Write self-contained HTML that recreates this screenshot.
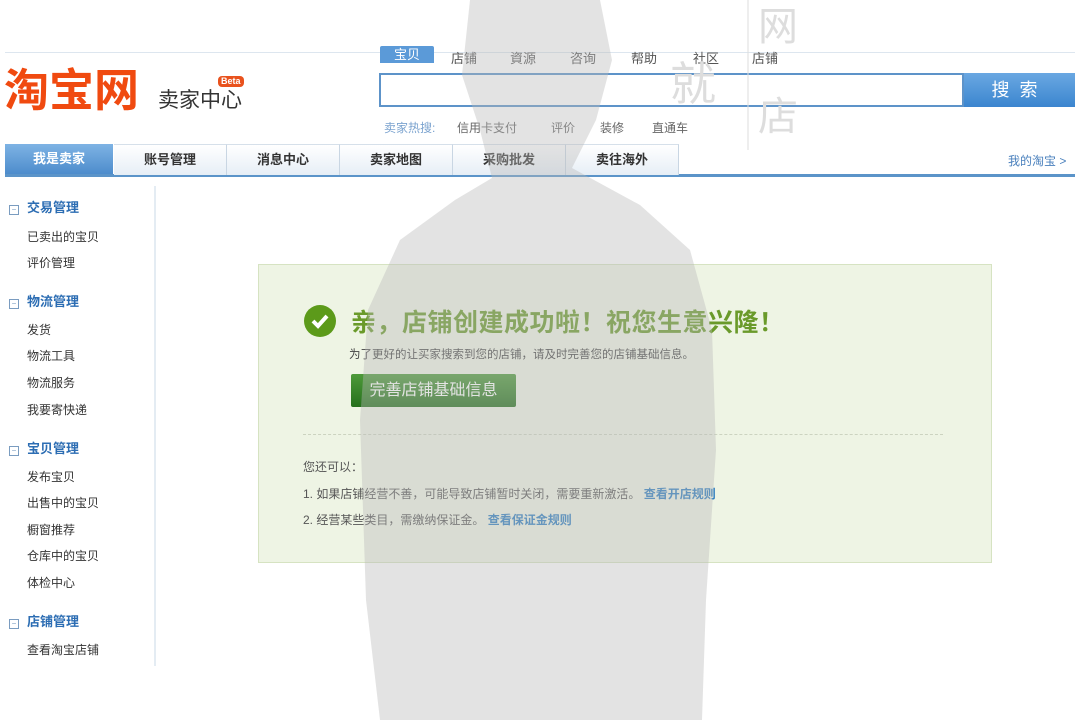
<!DOCTYPE html>
<html><head><meta charset="utf-8"><style>
body{margin:0;width:1080px;height:720px;background:#fff;position:relative;overflow:hidden;font-family:"Liberation Sans","Noto Sans CJK SC",sans-serif;font-size:12px;color:#333}
.a{position:absolute}
.topline{left:5px;top:52px;width:1070px;height:1px;background:#dde6ef}
.logo{left:4px;top:66px;font-size:45px;font-weight:bold;color:#f04a10;letter-spacing:0;line-height:50px}
.sub{left:158px;top:84px;font-size:21px;color:#333}
.beta{left:218px;top:76px;background:#e9521d;color:#fff;font-size:9px;border-radius:4px;padding:0 3px;line-height:11px;font-weight:bold}
.tabs span{position:absolute;top:48px;font-size:13px;color:#555}
.search{left:379px;top:73px;width:585px;height:34px;border:2px solid #5d93c9;box-sizing:border-box;background:#fff}
.sbtn{left:964px;top:73px;width:111px;height:34px;background:linear-gradient(#6aa8e2,#3b85cf);color:#fff;font-size:18px;text-align:center;line-height:34px;letter-spacing:10px}
.hot{top:119px;font-size:12px;color:#666}
.nav{left:5px;top:144px;width:1070px;height:30px;border-bottom:3px solid #5b94c9;box-sizing:content-box}
.nav div{position:absolute;top:0;height:30px;line-height:30px;text-align:center;font-weight:bold;font-size:13px;color:#333;background:linear-gradient(#fff,#e6eef6);border-right:1px solid #c9d6e3;border-top:1px solid #d6e0ea}
.side{left:5px;top:186px;width:149px;height:480px;border-right:2px solid #e4ecf3;background:#fff}
.side .h{position:absolute;left:4px;color:#2c6db3;font-weight:bold;font-size:13px}
.side .h b{display:inline-block;width:8px;height:8px;border:1px solid #7a9cc0;margin-right:8px;font-size:8px;line-height:7px;text-align:center;color:#7a9cc0;font-weight:normal}
.side .i{position:absolute;left:22px;font-size:12px;color:#333}
.box{left:258px;top:264px;width:734px;height:299px;background:#eef4e4;border:1px solid #d6e3c2;box-sizing:border-box}
</style></head><body>
<div class="a topline"></div>
<div class="a logo">淘宝网</div>
<div class="a sub">卖家中心</div>
<div class="a beta">Beta</div>
<div class="tabs">
<span style="left:380px;top:46px;background:#5b9ad8;color:#fff;padding:0 14px;height:17px;line-height:17px;border-radius:2px 2px 0 0">宝贝</span>
<span style="left:451px">店铺</span><span style="left:510px">資源</span><span style="left:570px">咨询</span><span style="left:631px">帮助</span><span style="left:693px">社区</span><span style="left:752px">店铺</span>
</div>
<div class="a search"></div>
<div class="a sbtn">搜索</div>
<span class="a hot" style="left:384px;color:#7ba3cf">卖家热搜:</span>
<span class="a hot" style="left:457px">信用卡支付</span>
<span class="a hot" style="left:551px">评价</span>
<span class="a hot" style="left:600px">装修</span>
<span class="a hot" style="left:652px">直通车</span>
<div class="a nav">
<div style="left:0;width:108px;background:linear-gradient(#7eb3e4,#4d8ccc);color:#fff;border:none">我是卖家</div>
<div style="left:109px;width:112px">账号管理</div>
<div style="left:222px;width:112px">消息中心</div>
<div style="left:335px;width:112px">卖家地图</div>
<div style="left:448px;width:112px">采购批发</div>
<div style="left:561px;width:112px">卖往海外</div>
</div>
<span class="a" style="left:1008px;top:152px;color:#4a80bd;font-size:12px">我的淘宝 &gt;</span>
<div class="a side">
<div class="h" style="top:11px"><b>−</b>交易管理</div>
<div class="i" style="top:42px">已卖出的宝贝</div>
<div class="i" style="top:68px">评价管理</div>
<div class="h" style="top:105px"><b>−</b>物流管理</div>
<div class="i" style="top:135px">发货</div>
<div class="i" style="top:161px">物流工具</div>
<div class="i" style="top:188px">物流服务</div>
<div class="i" style="top:215px">我要寄快递</div>
<div class="h" style="top:252px"><b>−</b>宝贝管理</div>
<div class="i" style="top:282px">发布宝贝</div>
<div class="i" style="top:308px">出售中的宝贝</div>
<div class="i" style="top:335px">橱窗推荐</div>
<div class="i" style="top:361px">仓库中的宝贝</div>
<div class="i" style="top:388px">体检中心</div>
<div class="h" style="top:425px"><b>−</b>店铺管理</div>
<div class="i" style="top:455px">查看淘宝店铺</div>
</div>
<div class="a box"></div>
<div class="a" style="left:304px;top:305px;width:32px;height:32px;border-radius:50%;background:#5c9a1a"><svg width="32" height="32"><path d="M9 16l5 5 9-10" stroke="#fff" stroke-width="4" fill="none"/></svg></div>
<div class="a" style="left:351px;top:303px;font-size:25px;color:#6a9a2a;letter-spacing:0.5px;font-weight:bold">亲，店铺创建成功啦！祝您生意兴隆！</div>
<div class="a" style="left:349px;top:346px;font-size:11.5px;color:#444">为了更好的让买家搜索到您的店铺，请及时完善您的店铺基础信息。</div>
<div class="a" style="left:351px;top:374px;width:165px;height:33px;background:linear-gradient(#4e9a3a,#25701c);border-radius:2px;color:#fff;font-size:16px;line-height:33px;text-align:center">完善店铺基础信息</div>
<div class="a" style="left:303px;top:434px;width:640px;border-top:1px dashed #ccd3c0"></div>
<div class="a" style="left:303px;top:458px;font-size:12px;color:#555">您还可以：</div>
<div class="a" style="left:303px;top:485px;font-size:12px;color:#555">1. 如果店铺经营不善，可能导致店铺暂时关闭，需要重新激活。 <span style="color:#2e7dc0;font-weight:bold">查看开店规则</span></div>
<div class="a" style="left:303px;top:511px;font-size:12px;color:#555">2. 经营某些类目，需缴纳保证金。 <span style="color:#2e7dc0;font-weight:bold">查看保证金规则</span></div>
<svg class="a" style="left:0;top:0" width="1080" height="720"><path d="M470 0 L600 0 L612 60 L596 120 L572 168 L640 205 L690 250 L712 330 L716 450 L706 600 L702 720 L380 720 L366 600 L360 420 L368 310 L400 240 L455 200 L492 178 L480 130 L462 75 Z" fill="#b8b8b8" opacity="0.4"/>
<text x="670" y="100" font-size="46" fill="#ddd" font-family="Noto Sans CJK SC">就</text>
<line x1="748" y1="0" x2="748" y2="150" stroke="#ddd"/>
<text x="758" y="40" font-size="40" fill="#ddd" font-family="Noto Sans CJK SC">网</text>
<text x="758" y="130" font-size="40" fill="#ddd" font-family="Noto Sans CJK SC">店</text>
</svg>
</body></html>
